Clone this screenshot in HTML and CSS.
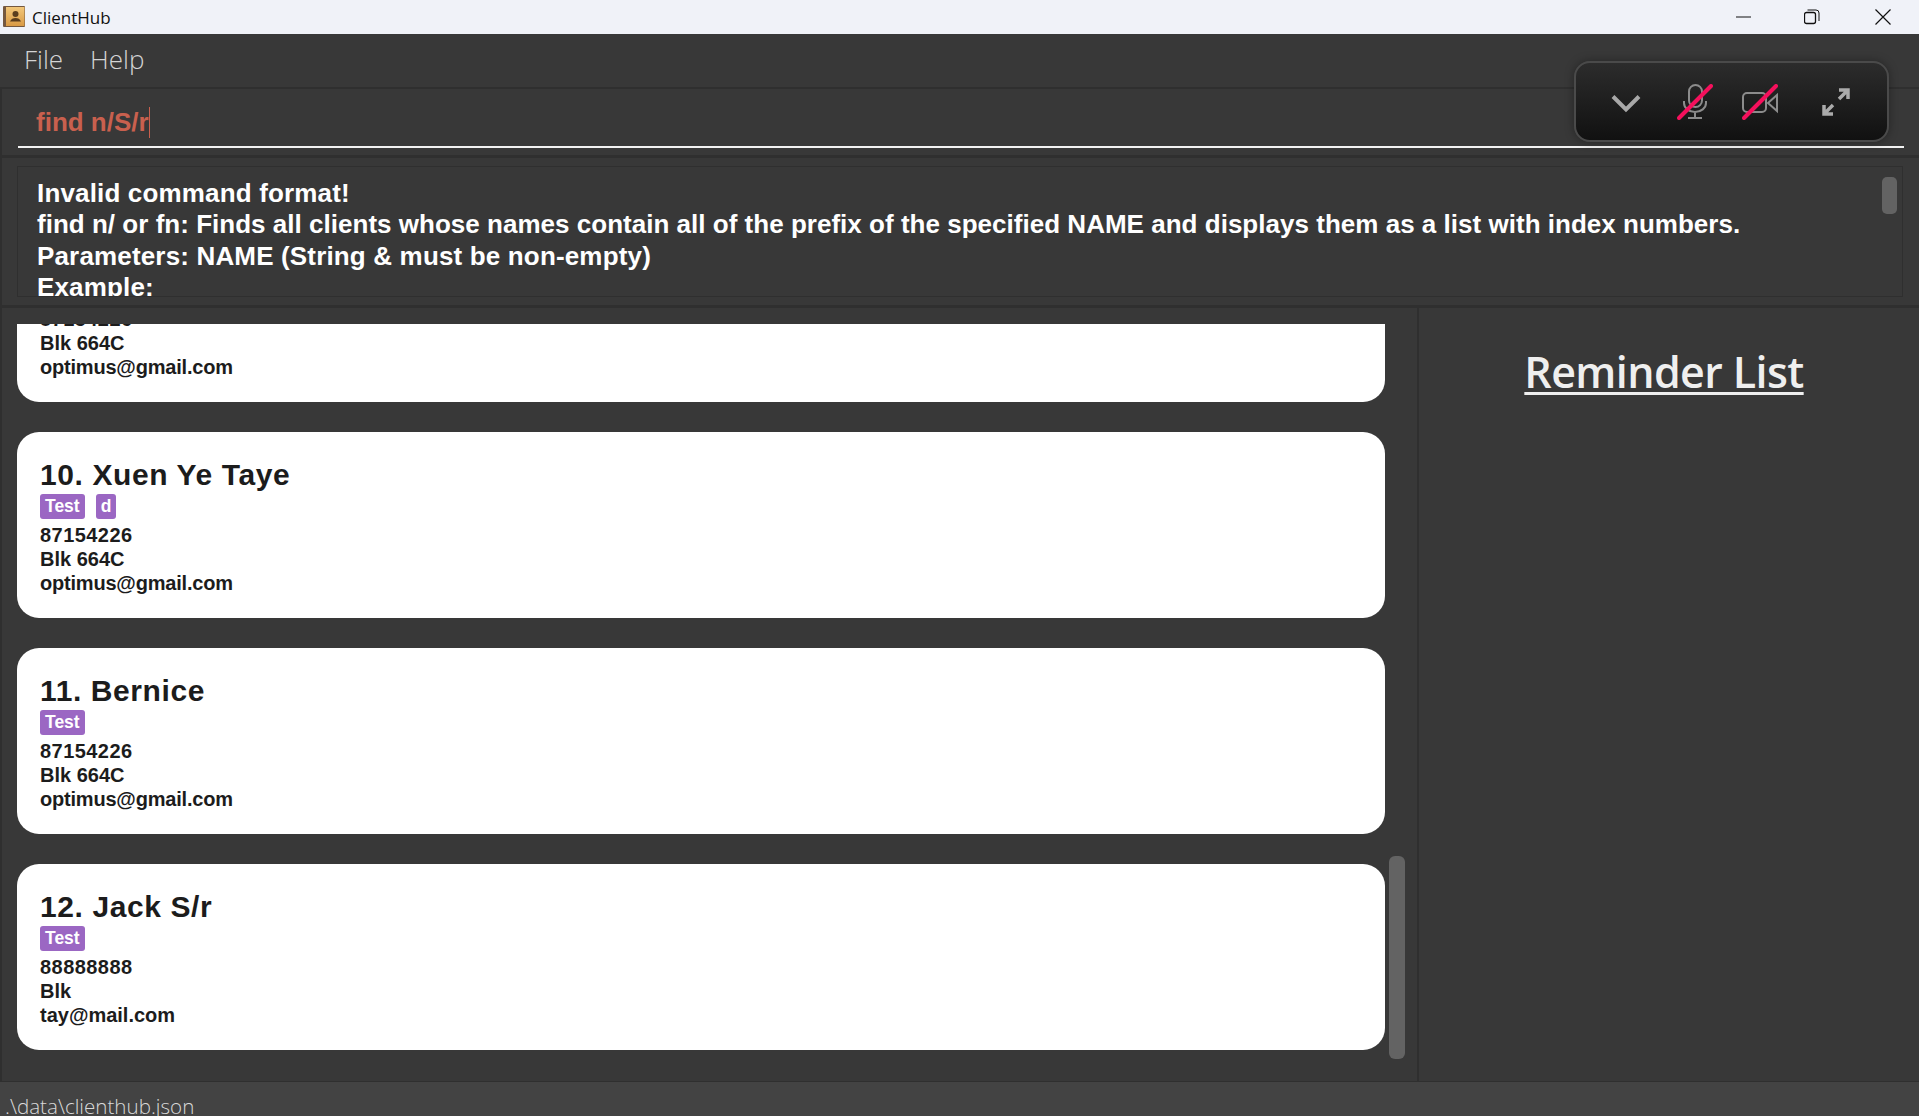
FILE: index.html
```html
<!DOCTYPE html>
<html lang="en">
<head>
<meta charset="utf-8">
<title>ClientHub</title>
<link rel="stylesheet" href="styles.css">
</head>
<body>
<header class="titlebar">
  <svg class="app-icon" viewBox="0 0 22 22" width="22" height="22">
    <defs>
      <linearGradient id="cover" x1="0" y1="0" x2="0" y2="1">
        <stop offset="0" stop-color="#f2c77a"/>
        <stop offset="1" stop-color="#d99a45"/>
      </linearGradient>
    </defs>
    <rect x="0" y="0" width="22" height="21" rx="1" fill="#75583f"/>
    <rect x="3" y="1" width="18.500" height="19" fill="url(#cover)"/>
    <circle cx="12.500" cy="8" r="3" fill="#5a3d1e"/>
    <path d="M7 15.500c1-2.500 3-3.500 5.500-3.500s4.500 1 5.500 3.500z" fill="#5a3d1e"/>
  </svg>
  <span class="app-name">ClientHub</span>
  <div class="window-controls">
    <svg class="win-btn" viewBox="0 0 16 16" width="16" height="16"><path d="M0 8h15" stroke="#111" fill="none"/></svg>
    <svg class="win-btn" viewBox="0 0 16 16" width="16" height="16"><rect x="0.500" y="3.500" width="11" height="11" rx="2" stroke="#111" fill="none" stroke-width="1.300"/><path d="M3.500 1h8.500a3 3 0 0 1 3 3v8" stroke="#111" fill="none"/></svg>
    <svg class="win-btn win-close" viewBox="0 0 16 16" width="16" height="16"><path d="M0.500 0.500l15 15M15.500 0.500l-15 15" stroke="#111" fill="none" stroke-width="1.200"/></svg>
  </div>
</header>

<nav class="menubar">
  <span class="menu-item">File</span>
  <span class="menu-item">Help</span>
</nav>

<section class="command-panel">
  <div class="command-box"><span class="command-text">find n/S/r</span><span class="caret"></span></div>
</section>

<section class="result-panel">
  <div class="result-box">
    <p class="result-line">Invalid command format!</p>
    <p class="result-line result-line-long">find n/ or fn: Finds all clients whose names contain all of the prefix of the specified NAME and displays them as a list with index numbers.</p>
    <p class="result-line">Parameters: NAME (String &amp; must be non-empty)</p>
    <p class="result-line">Example:</p>
    <div class="result-thumb"></div>
  </div>
</section>

<main class="content">
  <section class="list-panel">
    <div class="list-viewport">
      <div class="list-scroll">
        <article class="card">
          <h2 class="card-name">9. Optimus</h2>
          <div class="tags"><span class="tag">Test</span></div>
          <p class="card-line card-phone">87154226</p>
          <p class="card-line">Blk 664C</p>
          <p class="card-line card-email">optimus@gmail.com</p>
        </article>
        <article class="card">
          <h2 class="card-name">10. Xuen Ye Taye</h2>
          <div class="tags"><span class="tag">Test</span><span class="tag">d</span></div>
          <p class="card-line card-phone">87154226</p>
          <p class="card-line">Blk 664C</p>
          <p class="card-line card-email">optimus@gmail.com</p>
        </article>
        <article class="card">
          <h2 class="card-name">11. Bernice</h2>
          <div class="tags"><span class="tag">Test</span></div>
          <p class="card-line card-phone">87154226</p>
          <p class="card-line">Blk 664C</p>
          <p class="card-line card-email">optimus@gmail.com</p>
        </article>
        <article class="card">
          <h2 class="card-name">12. Jack S/r</h2>
          <div class="tags"><span class="tag">Test</span></div>
          <p class="card-line card-phone">88888888</p>
          <p class="card-line">Blk</p>
          <p class="card-line">tay@mail.com</p>
        </article>
      </div>
    </div>
    <div class="list-thumb"></div>
  </section>
  <aside class="reminder-panel">
    <h1 class="reminder-title">Reminder List</h1>
  </aside>
</main>

<footer class="statusbar">.\data\clienthub.json</footer>

<div class="call-widget">
  <svg class="ico ico-chevron" viewBox="0 0 36 36" width="36" height="36"><path d="M5 12.500l13 13 13-13" fill="none" stroke="#a8a8a8" stroke-width="4"/></svg>
  <svg class="ico ico-mic" viewBox="0 0 36 36" width="36" height="36">
    <rect x="12" y="1" width="13" height="22" rx="6.500" fill="none" stroke="#8c8c8c" stroke-width="2"/>
    <path d="M29 17v2a11 9 0 0 1-22 0v-2M18 28v6M11 34h14" fill="none" stroke="#8c8c8c" stroke-width="2"/>
    <path d="M2 34L34 2" stroke="#f5105c" stroke-width="4" stroke-linecap="round"/>
  </svg>
  <svg class="ico ico-cam" viewBox="0 0 36 36" width="36" height="36">
    <rect x="1" y="9" width="23" height="19" rx="4" fill="none" stroke="#8c8c8c" stroke-width="2"/>
    <path d="M26 19l9-8v16z" fill="none" stroke="#8c8c8c" stroke-width="2"/>
    <path d="M2 34L34 2" stroke="#f5105c" stroke-width="4" stroke-linecap="round"/>
  </svg>
  <svg class="ico ico-expand" viewBox="0 0 36 36" width="36" height="36">
    <path d="M21 6h9v9M30 6l-9 9M15 30H6v-9M6 30l9-9" fill="none" stroke="#ababab" stroke-width="3.500"/>
  </svg>
</div>
</body>
</html>
```
FILE: styles.css
```css
* { box-sizing: border-box; }
html, body { margin: 0; height: 100%; }
body {
  display: flex;
  flex-direction: column;
  height: 1116px;
  overflow: hidden;
  background: #383838;
  font-family: "Liberation Sans", Arial, sans-serif;
}
p, h1, h2 { margin: 0; }

.titlebar {
  flex: 0 0 34px;
  display: flex;
  align-items: center;
  padding-left: 3px;
  background: #f0f2f8;
  color: #111;
}
.app-icon { flex: none; }
.app-name { margin-left: 7px; font: 400 17px "Open Sans", sans-serif; }
.window-controls {
  margin-left: auto;
  display: flex;
  align-items: center;
  gap: 52px;
  padding-right: 28px;
}
.win-btn { display: block; }
.win-close { margin-left: 3px; }

.menubar {
  flex: 0 0 55px;
  display: flex;
  align-items: center;
  gap: 27px;
  padding: 0 0 4px 24px;
  background: #383838;
  border-bottom: 2px solid #2f2f2f;
}
.menu-item { font: 300 26px "Open Sans", sans-serif; color: #d4d4d4; }

.command-panel {
  flex: 0 0 69px;
  padding: 0 15px 0 16px;
  border-bottom: 3px solid #2f2f2f;
  border-left: 2px solid #2f2f2f;
}
.command-box {
  display: flex;
  align-items: center;
  height: 59px;
  padding: 10px 0 0 18px;
  border-bottom: 2px solid #f2f2f2;
}
.command-text { font-weight: 700; font-size: 26px; color: #c9604e; }
.caret { width: 1px; height: 31px; background: #c9604e; }

.result-panel {
  flex: 0 0 150px;
  padding: 8px 16px 8px 15px;
  border-bottom: 3px solid #2f2f2f;
  border-left: 2px solid #2f2f2f;
}
.result-box {
  position: relative;
  height: 131px;
  padding: 11px 0 0 19px;
  border: 1px solid #2f2f2f;
  overflow: hidden;
}
.result-line {
  font-weight: 700;
  font-size: 26px;
  line-height: 31.400px;
  letter-spacing: 0.16px;
  color: #fff;
  white-space: nowrap;
}
.result-line-long { letter-spacing: 0.02px; }
.result-thumb {
  position: absolute;
  top: 10px;
  right: 5px;
  width: 15px;
  height: 37px;
  border-radius: 5px;
  background: #636363;
}

.content {
  flex: 1;
  display: flex;
  min-height: 0;
}
.list-panel {
  position: relative;
  flex: 0 0 1419px;
  padding: 16px 0 0 17px;
  border-right: 2px solid #2f2f2f;
  border-left: 2px solid #2f2f2f;
}
.list-viewport {
  height: 757px;
  width: 1368px;
  margin-left: -2px;
  overflow: hidden;
}
.list-scroll {
  display: flex;
  flex-direction: column;
  gap: 30px;
  margin-top: -108px;
}
.card {
  height: 186px;
  padding: 24px 23px 0;
  background: #fff;
  border-radius: 22px;
  color: #1c1c1c;
}
.card-name { font-size: 30px; line-height: 38px; font-weight: 700; letter-spacing: 0.6px; }
.tags { display: flex; gap: 11px; height: 25px; margin-bottom: 4px; }
.tag {
  padding: 0 5px;
  border-radius: 3px;
  background: #9b67c3;
  color: #fff;
  font-size: 17.500px;
  line-height: 25px;
  font-weight: 700;
}
.card-line { font-size: 20px; line-height: 24px; font-weight: 700; }
.card-phone { letter-spacing: 0.45px; }
.card-email { letter-spacing: -0.2px; }
.list-thumb {
  position: absolute;
  top: 548px;
  left: 1387px;
  width: 16px;
  height: 203px;
  border-radius: 6px;
  background: #636363;
}

.reminder-panel { flex: 1; display: flex; flex-direction: column; align-items: center; padding: 34px 10px 0 0; }
.reminder-title {
  font: 600 43px "Open Sans", sans-serif;
  letter-spacing: -0.6px;
  color: #efefef;
  text-decoration: underline;
  text-decoration-thickness: 3px;
  text-underline-offset: 4px;
}

.statusbar {
  flex: 0 0 35px;
  padding: 10px 0 0 5px;
  background: #434343;
  border-top: 1px solid #2f2f2f;
  font: 300 20.600px "Open Sans", sans-serif;
  color: #d9d9d9;
  overflow: hidden;
  white-space: nowrap;
}

.call-widget {
  position: absolute;
  top: 61px;
  left: 1574px;
  width: 315px;
  height: 81px;
  display: flex;
  align-items: center;
  border: 2px solid #4a4a4a;
  border-radius: 16px;
  background: linear-gradient(#2c2c2c, #111);
  box-shadow: 0 0 10px rgba(0,0,0,.35);
  padding-left: 32px;
}
.ico { flex: none; display: block; }
.ico-mic { margin-left: 33px; }
.ico-cam { margin-left: 29px; }
.ico-expand { margin-left: 40px; }
```
